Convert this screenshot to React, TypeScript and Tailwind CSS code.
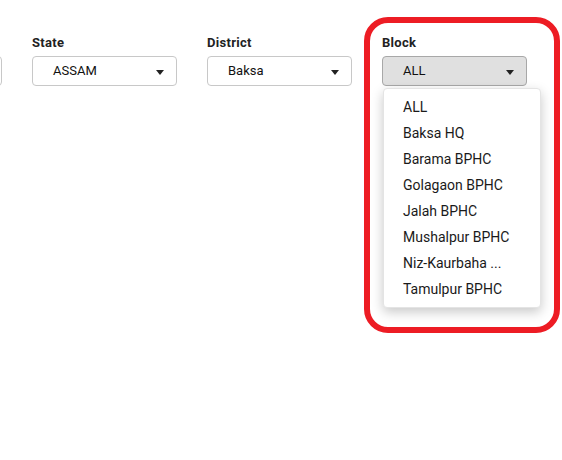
import React from "react";

const font = { fontFamily: "Roboto, 'Noto Sans', sans-serif" };

function Caret() {
  return (
    <span className="absolute right-[12px] top-[13px] w-0 h-0 border-l-[4px] border-r-[4px] border-t-[5px] border-l-transparent border-r-transparent border-t-[#222]" />
  );
}

function Field({ label, value, active }: { label: string; value: string; active?: boolean }) {
  return (
    <div className="w-[145px] shrink-0 relative">
      <div className="text-[13px] font-bold leading-[16px] text-[#222] tracking-[0.3px] h-[16px]">{label}</div>
      <div
        className={
          "mt-[5px] h-[30px] rounded-[4px] border relative flex items-center pl-[20px] text-[13px] text-[#111] " +
          (active ? "bg-[#e0e0e0] border-[#a8a8a8]" : "bg-white border-[#c8c8c8]")
        }
      >
        {value}
        <Caret />
      </div>
    </div>
  );
}

const items = [
  "ALL",
  "Baksa HQ",
  "Barama BPHC",
  "Golagaon BPHC",
  "Jalah BPHC",
  "Mushalpur BPHC",
  "Niz-Kaurbaha ...",
  "Tamulpur BPHC",
];

export default function App() {
  return (
    <div className="w-[562px] h-[460px] bg-white relative overflow-hidden" style={font}>
      <div className="flex gap-[30px] ml-[-143px] pt-[35px]">
        <Field label="" value="" />
        <Field label="State" value="ASSAM" />
        <Field label="District" value="Baksa" />
        <div className="relative">
          <Field label="Block" value="ALL" active />
          <div className="absolute left-[1px] top-[53px] w-[158px] bg-white rounded-[4px] border border-[#e4e4e4] shadow-[0_4px_12px_rgba(0,0,0,0.22)] py-[5px] z-10">
            {items.map((it) => (
              <div key={it} className="h-[26px] flex items-center pl-[19px] text-[14px] text-[#1a1a1a]">
                {it}
              </div>
            ))}
          </div>
        </div>
      </div>
      <div className="absolute left-[364px] top-[17px] w-[196px] h-[316px] border-[6px] border-[#ed1c24] rounded-[24px] z-20 pointer-events-none" />
    </div>
  );
}
